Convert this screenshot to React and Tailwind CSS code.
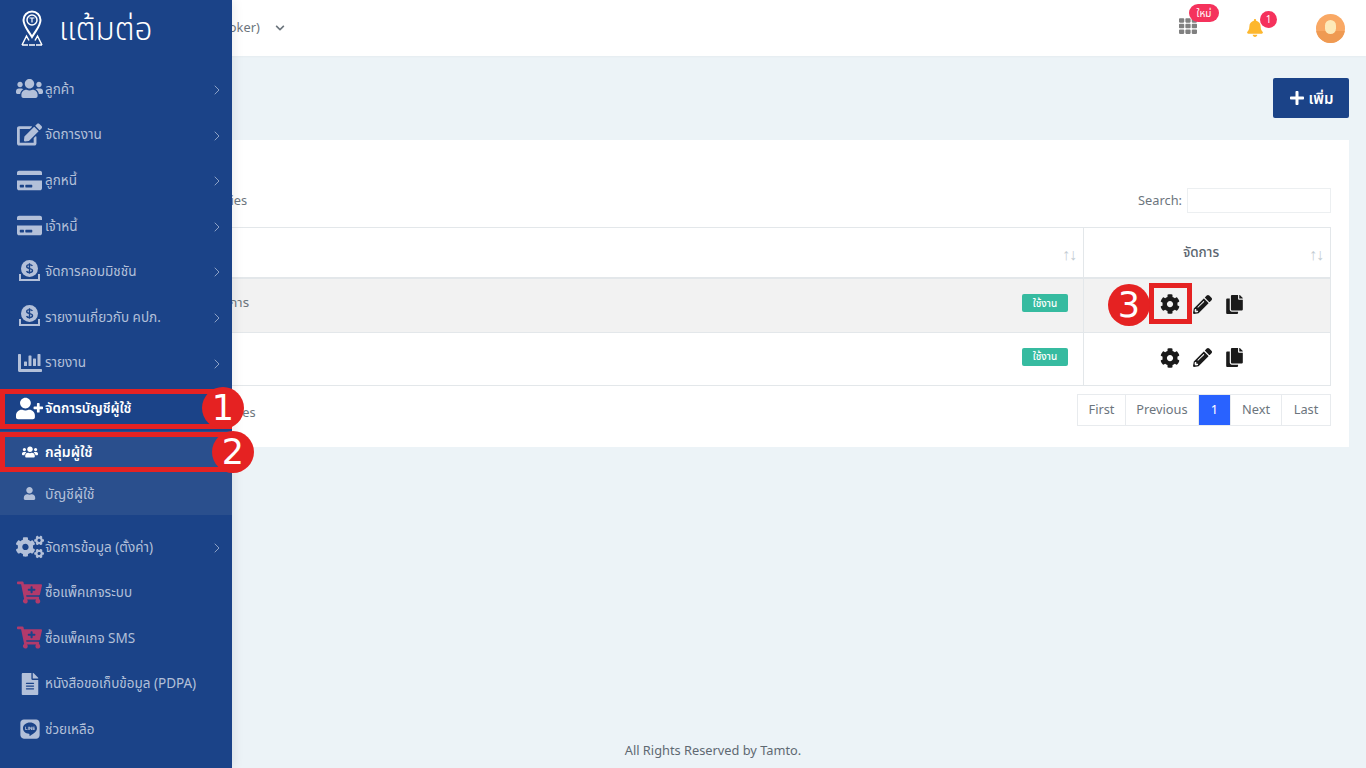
import React from 'react';
import {
	FaUsers, FaEdit, FaCreditCard, FaChartBar, FaUserPlus, FaCogs, FaCartPlus, FaFileAlt, FaLine,
	FaCog, FaPencilAlt, FaCopy, FaTh, FaBell, FaPlus, FaUser, FaChevronDown,
} from 'react-icons/fa';
import { FiChevronRight } from 'react-icons/fi';

const CoinIcon = () => (
	<svg width="23" height="23" viewBox="0 0 23 23" fill="currentColor">
		<circle cx="11.5" cy="8.5" r="8.5" />
		<path d="M1 14h2v5h17v-5h2v7H1z" />
		<path d="M11.5 3.2v10.6M14.4 5.9c-.6-1-1.6-1.3-2.9-1.3-1.6 0-2.8.8-2.8 2 0 2.9 5.8 1.2 5.8 4 0 1.3-1.3 2-3 2-1.3 0-2.4-.5-3-1.5" fill="none" stroke="#1b4388" strokeWidth="1.4" />
	</svg>
);

const Logo = () => (
	<svg width="24" height="36" viewBox="0 0 24 36" fill="none" stroke="#fff">
		<path d="M12 27C8 20 3.5 16 3.5 10a8.5 8.5 0 0 1 17 0C20.500 16 16 20 12 27z" strokeWidth="2" />
		<circle cx="12" cy="10" r="5" strokeWidth="1.500" />
		<path d="M9.500 8h5M12 8v4.500" strokeWidth="1.200" />
		<path d="M2 35l4.500-9 2.500 4.500M22 35l-4.500-9-2.500 4.500M2 35h6M16 35h6M9 35h6" strokeWidth="1.500" />
	</svg>
);

const MenuRow = ({ icon, label, arrow = true, active = false, extra = '' }) => (
	<div className={`flex h-[45.6px] shrink-0 items-center pl-[16px] pr-[7px] text-[13.5px] ${active ? 'font-semibold text-white' : 'text-[#b3c0d9]'} ${extra}`}>
		<span className="flex w-[29px] shrink-0 items-center justify-center -ml-[1px] mr-[1px]">{icon}</span>
		<span className="flex-1 whitespace-nowrap">{label}</span>
		{arrow && <FiChevronRight size={16} className="mt-[2px] text-[#9fb0cf]" strokeWidth={1.3} />}
	</div>
);

const SubRow = ({ icon, label, active = false }) => (
	<div className={`flex h-[42px] items-center pl-[45px] text-[14px] ${active ? 'font-semibold text-white' : 'text-[#b3c0d9]'}`}>
		<span className="absolute left-[21px] flex w-[17px] justify-center">{icon}</span>
		{label}
	</div>
);

const Sidebar = () => (
	<aside className="absolute left-0 top-0 z-10 flex h-[768px] w-[232px] flex-col bg-[#1b4388] shadow-[2px_0_10px_rgba(0,0,0,0.08)]">
		<div className="flex h-[66.2px] shrink-0 items-start pl-[20px] pt-[10px]">
			<Logo />
			<span className="ml-[15px] -mt-[5px] text-[31.5px] font-light leading-[46px] text-white">แต้มต่อ</span>
		</div>
		<MenuRow icon={<FaUsers size={27} />} label="ลูกค้า" />
		<MenuRow icon={<FaEdit size={25} />} label="จัดการงาน" />
		<MenuRow icon={<FaCreditCard size={25} />} label="ลูกหนี้" />
		<MenuRow icon={<FaCreditCard size={25} />} label="เจ้าหนี้" />
		<MenuRow icon={<CoinIcon />} label="จัดการคอมมิชชัน" />
		<MenuRow icon={<CoinIcon />} label="รายงานเกี่ยวกับ คปภ." />
		<MenuRow icon={<FaChartBar size={24} />} label="รายงาน" />
		<MenuRow icon={<FaUserPlus size={27} className="text-white" />} label="จัดการบัญชีผู้ใช้" arrow={false} active />
		<div className="relative mb-[9px] h-[84px] shrink-0 bg-[#2a4f8d]">
			<SubRow icon={<FaUsers size={16} className="text-white" />} label="กลุ่มผู้ใช้" active />
			<SubRow icon={<FaUser size={13} />} label="บัญชีผู้ใช้" />
		</div>
		<MenuRow icon={<FaCogs size={28} />} label="จัดการข้อมูล (ตั้งค่า)" />
		<MenuRow icon={<FaCartPlus size={25} className="text-[#b23a6b]" />} label="ซื้อแพ็คเกจระบบ" arrow={false} />
		<MenuRow icon={<FaCartPlus size={25} className="text-[#b23a6b]" />} label="ซื้อแพ็คเกจ SMS" arrow={false} />
		<MenuRow icon={<FaFileAlt size={22} />} label="หนังสือขอเก็บข้อมูล (PDPA)" arrow={false} />
		<MenuRow icon={<FaLine size={22} />} label="ช่วยเหลือ" arrow={false} />
	</aside>
);

const Header = () => (
	<header className="flex h-[56px] shrink-0 items-center bg-white pl-[77px] pr-[21px] shadow-[0_1px_2px_rgba(0,0,0,0.03)]">
		<span className="text-[12.8px] text-[#6c757d]">บริษัท ทดสอบ (Broker)</span>
		<FaChevronDown size={10} className="ml-[15px] text-[#6c757d]" />
		<div className="relative ml-auto mr-[49px] mt-[-4px]">
			<FaTh size={18} className="text-[#808080]" />
			<span className="absolute -right-[22px] -top-[13px] flex h-[18px] w-[30px] items-center justify-center rounded-full bg-[#f5325c] text-[10px] text-white">ใหม่</span>
		</div>
		<div className="relative mr-[52px]">
			<FaBell size={18} className="text-[#fdb72e]" />
			<span className="absolute -right-[13px] -top-[8px] flex h-[17px] w-[17px] items-center justify-center rounded-full bg-[#f5325c] text-[10px] text-white">1</span>
		</div>
		<div className="relative flex h-[29px] w-[29px] items-start justify-center overflow-hidden rounded-full bg-[#f9a864]">
			<span className="absolute bottom-0 left-0 h-[12px] w-full bg-[#ef9a52]" />
			<span className="relative mt-[6px] h-[14px] w-[11px] rounded-full bg-[#fde9b8]" />
		</div>
	</header>
);

const Badge = () => (
	<span className="flex h-[18px] w-[46px] items-center justify-center rounded-[2px] bg-[#36bba0] text-[10px] font-medium text-white">ใช้งาน</span>
);

const Actions = () => (
	<div className="flex items-center justify-center gap-[13px] pb-[3px] pr-[10px] text-[#1a1a1a]">
		<FaCog size={20} />
		<FaPencilAlt size={19} />
		<FaCopy size={19} />
	</div>
);

const SortArrows = () => (
	<span className="absolute bottom-[11px] right-[7px] text-[16px] tracking-[-1px] text-[#c3ccd3]">↑↓</span>
);

const TableRow = ({ label, labelClass, height, striped }) => (
	<div className={`flex border-b border-[#e3e7ea] ${height} ${striped ? 'bg-[#f2f2f2]' : 'bg-white'}`}>
		<div className="flex flex-1 items-center justify-between pb-[5px] pl-[12px] pr-[15px] text-[13px] text-[#6c757d]">
			<span className={`whitespace-nowrap ${labelClass}`}>{label}</span>
			<Badge />
		</div>
		<div className="flex w-[247px] items-center justify-center border-l border-[#e3e7ea]">
			<Actions />
		</div>
	</div>
);

const PAGES = [
	{ label: 'First', width: 'w-[48px]' },
	{ label: 'Previous', width: 'w-[73px]' },
	{ label: '1', width: 'w-[32px]', active: true },
	{ label: 'Next', width: 'w-[51px]' },
	{ label: 'Last', width: 'w-[48px]' },
];

const Main = () => (
	<main className="flex flex-1 flex-col px-[17px] pt-[22px]">
		<div className="flex justify-end">
			<button className="flex h-[40px] w-[76px] items-center justify-center gap-[4px] rounded-[2px] bg-[#1b4388] text-[15px] font-semibold text-white">
				<FaPlus size={16} />
				เพิ่ม
			</button>
		</div>
		<section className="mt-[22px] h-[307px] bg-white pl-[19px] pr-[18px] pt-[48px]">
			<div className="flex items-center justify-between text-[12.8px] text-[#6c757d]">
				<div className="flex items-center gap-[5px]">
					Show
					<span className="h-[25px] w-[67px] border border-[#eceff1]" />
					entries
				</div>
				<div className="flex items-center gap-[5px]">
					Search:
					<input className="h-[25px] w-[144px] border border-[#eceff1] bg-white" />
				</div>
			</div>
			<div className="mt-[14px] border-x border-t border-[#e3e7ea]">
				<div className="flex h-[51px] border-b-2 border-[#e3e7ea]">
					<div className="relative flex flex-1 items-center pl-[12px] text-[13.5px] font-medium text-[#5b6670]">
						ชื่อกลุ่ม
						<SortArrows />
					</div>
					<div className="relative flex w-[247px] items-center justify-center border-l border-[#e3e7ea] pr-[12px] text-[13.5px] font-medium text-[#5b6670]">
						จัดการ
						<SortArrows />
					</div>
				</div>
				<TableRow label="ผู้ดูแลระบบและผู้จัดการ" labelClass="w-[140px] text-right" height="h-[54px]" striped />
				<TableRow label="พนักงาน" labelClass="w-[100px]" height="h-[53px]" />
			</div>
			<div className="mt-[8px] flex items-start justify-between">
				<span className="mt-[9px] text-[12.8px] text-[#6c757d]">Showing 1 to 2 of 2 entries</span>
				<div className="flex h-[32px] border border-[#e8ebee]">
					{PAGES.map((page) => (
						<span
							key={page.label}
							className={`flex items-center justify-center border-r border-[#e8ebee] text-[12.8px] last:border-r-0 ${page.width} ${page.active ? 'bg-[#2962ff] text-white' : 'text-[#6c757d]'}`}
						>
							{page.label}
						</span>
					))}
				</div>
			</div>
		</section>
		<footer className="mt-auto pb-[8px] text-center text-[12.8px] text-[#5f6972]">All Rights Reserved by Tamto.</footer>
	</main>
);

const Marker = ({ number, extra }) => (
	<span className={`absolute z-30 flex h-[42px] w-[42px] items-center justify-center rounded-full bg-[#e52222] font-['DejaVu_Sans',sans-serif] text-[35px] leading-none text-white ${extra}`}>
		{number}
	</span>
);

const App = () => (
	<div className="relative h-[768px] w-[1366px] overflow-hidden bg-[#ecf3f7] font-['Noto_Sans','Noto_Sans_Thai',sans-serif]">
		<Sidebar />
		<div className="ml-[60px] flex h-full flex-col">
			<Header />
			<Main />
		</div>
		{/* annotation boxes on top of the screenshot */}
		<span className="absolute left-0 top-[389px] z-20 h-[40px] w-[232px] border-[5px] border-[#e52222]" />
		<span className="absolute left-0 top-[432px] z-20 h-[40px] w-[232px] border-[5px] border-[#e52222]" />
		<span className="absolute left-[1149px] top-[283px] z-20 h-[41px] w-[43px] border-[5px] border-[#e52222]" />
		<Marker number="1" extra="left-[202px] top-[387px]" />
		<Marker number="2" extra="left-[212px] top-[431px]" />
		<Marker number="3" extra="left-[1108px] top-[284px]" />
	</div>
);

export default App;
